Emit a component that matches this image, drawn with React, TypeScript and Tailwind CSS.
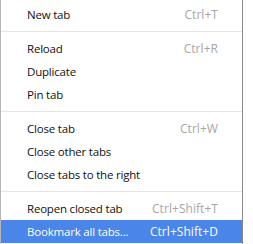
const items: ({ label: string; keys?: string; active?: boolean } | null)[] = [
  { label: 'New tab', keys: 'Ctrl+T' },
  null,
  { label: 'Reload', keys: 'Ctrl+R' },
  { label: 'Duplicate' },
  { label: 'Pin tab' },
  null,
  { label: 'Close tab', keys: 'Ctrl+W' },
  { label: 'Close other tabs' },
  { label: 'Close tabs to the right' },
  null,
  { label: 'Reopen closed tab', keys: 'Ctrl+Shift+T' },
  { label: 'Bookmark all tabs...', keys: 'Ctrl+Shift+D', active: true },
]

export default function App() {
  return (
    <div className="w-[253px] h-[244px] bg-white overflow-hidden" style={{ fontFamily: '"Open Sans", sans-serif' }}>
      <div className="w-[243px] h-[244px] border-l border-r border-l-[#b5b5b5] border-r-[#8a8a8a] pt-[3px] flex flex-col">
        {items.map((it, i) =>
          it === null ? (
            <div key={i} className="h-[11px] flex items-center">
              <div className="h-px w-full bg-[#e6e6e6]" />
            </div>
          ) : (
            <div
              key={i}
              className={
                'h-[23px] flex items-center justify-between pl-[26px] pr-[24px] text-[11.5px] tracking-[-0.2px] ' +
                (it.active ? 'bg-[#4a85ea] text-white' : 'text-[#111]')
              }
            >
              <span>{it.label}</span>
              {it.keys && (
                <span className={'text-[12px] tracking-[0.05px] ' + (it.active ? 'text-white' : 'text-[#a6a6a6]')}>
                  {it.keys}
                </span>
              )}
            </div>
          )
        )}
      </div>
    </div>
  )
}
